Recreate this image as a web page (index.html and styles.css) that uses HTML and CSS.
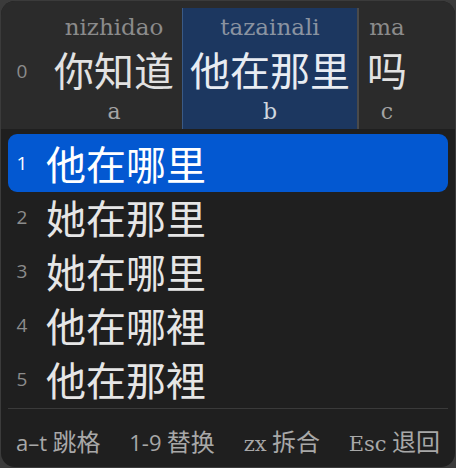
FILE: index.html
```html
<!DOCTYPE html>
<html lang="zh">
<head>
<meta charset="utf-8">
<link rel="stylesheet" href="styles.css">
</head>
<body>
<div class="window">
  <div class="top">
    <div class="idx">0</div>
    <div class="segs">
      <div class="seg">
        <div class="py">nizhidao</div>
        <div class="hz">你知道</div>
        <div class="key">a</div>
      </div>
      <div class="seg active">
        <div class="py">tazainali</div>
        <div class="hz">他在那里</div>
        <div class="key">b</div>
      </div>
      <div class="seg">
        <div class="py">ma</div>
        <div class="hz">吗</div>
        <div class="key">c</div>
      </div>
    </div>
  </div>
  <div class="list">
    <div class="cand sel"><span class="num">1</span><span class="txt">他在哪里</span></div>
    <div class="cand"><span class="num">2</span><span class="txt">她在那里</span></div>
    <div class="cand"><span class="num">3</span><span class="txt">她在哪里</span></div>
    <div class="cand"><span class="num">4</span><span class="txt">他在哪裡</span></div>
    <div class="cand"><span class="num">5</span><span class="txt">他在那裡</span></div>
  </div>
  <div class="footer">
    <span class="hint"><span class="k sans">a–t</span> 跳格</span>
    <span class="hint"><span class="k sans">1-9</span> 替换</span>
    <span class="hint"><span class="k">zx</span> 拆合</span>
    <span class="hint"><span class="k">Esc</span> 退回</span>
  </div>
</div>
</body>
</html>
```
FILE: styles.css
```css
html, body {
  margin: 0;
  padding: 0;
  background: #3b3b3b;
  width: 456px;
  height: 468px;
  overflow: hidden;
}
.window {
  margin: 1px;
  width: 454px;
  height: 466px;
  border-radius: 14px;
  overflow: hidden;
  background: #1f1f1f;
  display: flex;
  flex-direction: column;
  font-family: "Noto Sans CJK SC", sans-serif;
}
.top {
  background: #2b2b2b;
  height: 128px;
  box-sizing: border-box;
  padding: 7px 7px 0 7px;
  display: flex;
  align-items: stretch;
}
.idx {
  width: 28px;
  margin-right: 10px;
  font-family: "Open Sans", sans-serif;
  font-size: 19px;
  color: #8c8c8c;
  text-align: center;
  line-height: 1;
  align-self: center;
  margin-top: 6px;
}
.segs {
  display: flex;
  align-items: stretch;
}
.seg {
  display: flex;
  flex-direction: column;
  align-items: center;
  padding: 4px 8px 0 8px;
}
.seg.active {
  background: #1c3760;
  border-left: 1px solid #3a5a86;
  border-right: 2px solid #4a4a4a;
  padding: 4px 7px 0 7px;
}
.py {
  font-family: "DejaVu Serif", serif;
  font-size: 23px;
  line-height: 30px;
  color: #8b8b8b;
}
.seg.active .py { color: #8a93a1; }
.hz {
  font-family: "Noto Sans CJK SC", sans-serif;
  font-size: 40px;
  line-height: 54px;
  color: #e2e2e2;
  white-space: nowrap;
}
.seg.active .hz { color: #e8ecf2; }
.key {
  font-family: "DejaVu Serif", serif;
  font-size: 22px;
  line-height: 32px;
  color: #a4a4a4;
}
.seg.active .key { color: #cfd6df; }
.list {
  padding: 7px 7px 2px 7px;
  display: flex;
  flex-direction: column;
}
.cand {
  height: 54px;
  display: flex;
  align-items: center;
  border-radius: 9px;
}
.cand.sel {
  background: #0358d1;
  margin: -2px 0;
  padding: 2px 0;
}
.num {
  width: 28px;
  margin-right: 10px;
  text-align: center;
  font-family: "Open Sans", sans-serif;
  font-size: 19px;
  color: #8c8c8c;
}
.sel .num { color: #ffffff; }
.txt {
  font-size: 40px;
  line-height: 54px;
  color: #e6e6e6;
  white-space: nowrap;
}
.sel .txt { color: #ffffff; }
.footer {
  margin: 0 7px;
  border-top: 1px solid #3a3a3a;
  flex: 1;
  display: flex;
  justify-content: space-between;
  align-items: center;
  padding: 4px 8px 0 8px;
  color: #a8a8a8;
  font-size: 24px;
  white-space: nowrap;
}
.k {
  font-family: "DejaVu Serif", serif;
  font-size: 21px;
}
.k.sans {
  font-family: "Open Sans", sans-serif;
  font-size: 22px;
}
```
